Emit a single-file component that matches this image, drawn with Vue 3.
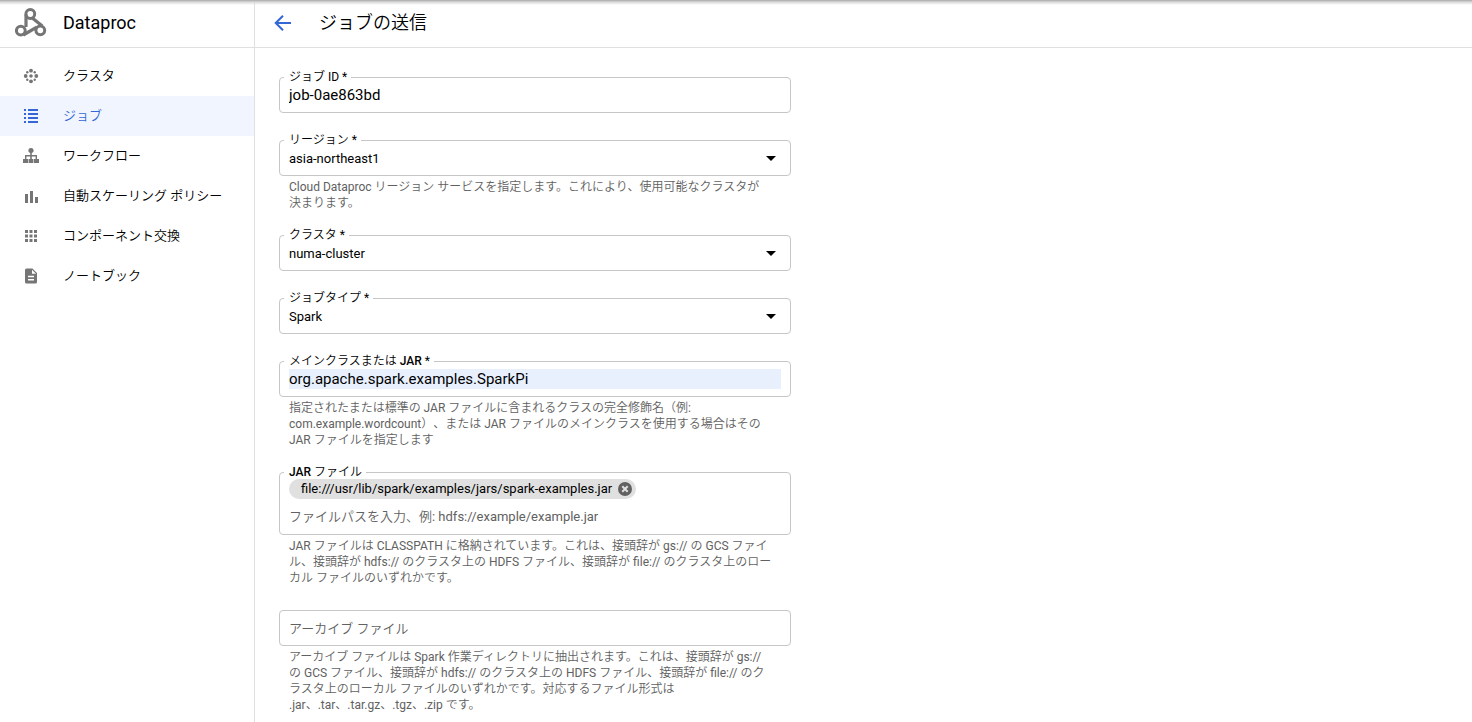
<script setup>
import { ref } from 'vue'

const navItems = [
  { id: 'clusters', label: 'クラスタ' },
  { id: 'jobs', label: 'ジョブ', active: true },
  { id: 'workflows', label: 'ワークフロー' },
  { id: 'autoscaling', label: '自動スケーリング ポリシー' },
  { id: 'components', label: 'コンポーネント交換' },
  { id: 'notebooks', label: 'ノートブック' },
]

const jobId = ref('job-0ae863bd')
const region = ref('asia-northeast1')
const cluster = ref('numa-cluster')
const jobType = ref('Spark')
const mainClass = ref('org.apache.spark.examples.SparkPi')
const jars = ref(['file:///usr/lib/spark/examples/jars/spark-examples.jar'])
const jarDraft = ref('')
const archive = ref('')

const regionHint = 'Cloud Dataproc リージョン サービスを指定します。これにより、使用可能なクラスタが\n決まります。'
const mainHint =
  '指定されたまたは標準の JAR ファイルに含まれるクラスの完全修飾名（例:\ncom.example.wordcount）、または JAR ファイルのメインクラスを使用する場合はその\nJAR ファイルを指定します'
const jarHint =
  'JAR ファイルは CLASSPATH に格納されています。これは、接頭辞が gs:// の GCS ファイ\nル、接頭辞が hdfs:// のクラスタ上の HDFS ファイル、接頭辞が file:// のクラスタ上のロー\nカル ファイルのいずれかです。'
const archiveHint =
  'アーカイブ ファイルは Spark 作業ディレクトリに抽出されます。これは、接頭辞が gs://\nの GCS ファイル、接頭辞が hdfs:// のクラスタ上の HDFS ファイル、接頭辞が file:// のク\nラスタ上のローカル ファイルのいずれかです。対応するファイル形式は\n.jar、.tar、.tar.gz、.tgz、.zip です。'

function removeJar(i) {
  jars.value.splice(i, 1)
}
</script>

<template>
  <div class="page">
    <aside class="sidebar">
      <div class="brand">
        <svg class="logo" width="32" height="30" viewBox="0 0 32 30" fill="none" stroke="#757575" aria-hidden="true">
          <circle cx="15.3" cy="6" r="4.400" stroke-width="3" />
          <circle cx="5.8" cy="22.600" r="4.400" stroke-width="3" />
          <circle cx="25.300" cy="22.300" r="4.400" stroke-width="3" />
          <path d="M11 6.500v12.500M17.300 10l10 8M8.300 27l13.500-7.800" stroke-width="3.200" />
        </svg>
        <span class="brand-name">Dataproc</span>
      </div>
      <nav class="nav">
        <a v-for="item in navItems" :key="item.id" href="#" class="nav-item" :class="{ active: item.active }">
          <svg class="nav-icon" width="18" height="18" viewBox="0 0 18 18" fill="currentColor" aria-hidden="true">
            <g v-if="item.id === 'clusters'">
              <circle cx="9" cy="9" r="1.800" />
              <circle cx="9" cy="3.700" r="1.900" />
              <circle cx="9" cy="14.300" r="1.900" />
              <circle cx="3.700" cy="9" r="1.900" />
              <circle cx="14.300" cy="9" r="1.900" />
              <circle cx="5.300" cy="5.300" r="1.200" />
              <circle cx="12.700" cy="5.300" r="1.200" />
              <circle cx="5.300" cy="12.700" r="1.200" />
              <circle cx="12.700" cy="12.700" r="1.200" />
            </g>
            <path
              v-else-if="item.id === 'jobs'"
              d="M2 2h2v2H2zM6 2h10v2H6zM2 6h2v2H2zM6 6h10v2H6zM2 10h2v2H2zM6 10h10v2H6zM2 14h2v2H2zM6 14h10v2H6z"
            />
            <path
              v-else-if="item.id === 'workflows'"
              d="M9 1a2.600 2.600 0 0 1 .8 5.100V8H15v4h2v4h-5v-4h1.600V9.400H9.800V12h1.600v4H6.600v-4h1.600V9.400H4.400V12H6v4H1v-4h2V8h5.200V6.100A2.600 2.600 0 0 1 9 1z"
            />
            <path v-else-if="item.id === 'autoscaling'" d="M3 7h3v9H3zM8 4h3v12H8zM13 10h3v6h-3z" />
            <path
              v-else-if="item.id === 'components'"
              d="M3 3h3v3H3zM7.500 3h3v3h-3zM12 3h3v3h-3zM3 7.500h3v3H3zM7.500 7.500h3v3h-3zM12 7.500h3v3h-3zM3 12h3v3H3zM7.500 12h3v3h-3zM12 12h3v3h-3z"
            />
            <path
              v-else
              fill-rule="evenodd"
              d="M4.500 1.500h6L15 6v9a1.500 1.500 0 0 1-1.500 1.500h-9A1.500 1.500 0 0 1 3 15V3a1.500 1.500 0 0 1 1.500-1.500zM10 2.700v4h4zM6 8.700v1.500h6V8.700zM6 12v1.500h6V12z"
            />
          </svg>
          <span>{{ item.label }}</span>
        </a>
      </nav>
    </aside>

    <main class="main">
      <header class="header">
        <button type="button" class="back" aria-label="戻る">
          <svg width="24" height="24" viewBox="0 0 24 24" fill="none" stroke="#3367d6" stroke-width="2" aria-hidden="true">
            <path d="M20 12H5.500M12 4.700L4.700 12l7.300 7.300" />
          </svg>
        </button>
        <h1 class="title">ジョブの送信</h1>
      </header>

      <form class="form" @submit.prevent>
        <div class="field">
          <div class="box">
            <label for="job-id" class="label">ジョブ ID *</label>
            <input id="job-id" v-model="jobId" class="text" type="text" autocomplete="off" />
          </div>
          <p class="hint"></p>
        </div>

        <div class="field">
          <div class="box">
            <label for="region" class="label">リージョン *</label>
            <select id="region" v-model="region" class="select">
              <option>asia-northeast1</option>
            </select>
            <svg class="caret" width="10" height="5" viewBox="0 0 10 5" aria-hidden="true"><path d="M0 0h10L5 5z" /></svg>
          </div>
          <p class="hint">{{ regionHint }}</p>
        </div>

        <div class="field">
          <div class="box">
            <label for="cluster" class="label">クラスタ *</label>
            <select id="cluster" v-model="cluster" class="select">
              <option>numa-cluster</option>
            </select>
            <svg class="caret" width="10" height="5" viewBox="0 0 10 5" aria-hidden="true"><path d="M0 0h10L5 5z" /></svg>
          </div>
          <p class="hint"></p>
        </div>

        <div class="field">
          <div class="box">
            <label for="job-type" class="label">ジョブタイプ *</label>
            <select id="job-type" v-model="jobType" class="select">
              <option>Spark</option>
            </select>
            <svg class="caret" width="10" height="5" viewBox="0 0 10 5" aria-hidden="true"><path d="M0 0h10L5 5z" /></svg>
          </div>
          <p class="hint"></p>
        </div>

        <div class="field">
          <div class="box">
            <label for="main-class" class="label">メインクラスまたは <span class="latin">JAR</span> *</label>
            <input id="main-class" v-model="mainClass" class="text filled" type="text" autocomplete="off" />
          </div>
          <p class="hint">{{ mainHint }}</p>
        </div>

        <div class="field">
          <div class="box chips">
            <label for="jars" class="label"><span class="latin">JAR</span> ファイル</label>
            <span v-for="(jar, i) in jars" :key="jar" class="chip">
              {{ jar }}
              <button type="button" class="chip-remove" aria-label="削除" @click="removeJar(i)">
                <svg width="14" height="14" viewBox="0 0 14 14" aria-hidden="true">
                  <circle cx="7" cy="7" r="7" fill="#616161" />
                  <path d="M4.300 4.300l5.400 5.400M9.700 4.300l-5.400 5.400" stroke="#e0e0e0" stroke-width="2" />
                </svg>
              </button>
            </span>
            <input
              id="jars"
              v-model="jarDraft"
              class="text small"
              type="text"
              placeholder="ファイルパスを入力、例: hdfs://example/example.jar"
            />
          </div>
          <p class="hint">{{ jarHint }}</p>
        </div>

        <div class="field">
          <div class="box">
            <input
              id="archive"
              v-model="archive"
              class="text small"
              type="text"
              aria-label="アーカイブ ファイル"
              placeholder="アーカイブ ファイル"
            />
          </div>
          <p class="hint">{{ archiveHint }}</p>
        </div>
      </form>
    </main>
  </div>
</template>

<style>
body {
  margin: 0;
  background: #fff;
}
</style>

<style scoped>
.page {
  position: relative;
  display: flex;
  min-height: 100vh;
  font-family: Roboto, 'Noto Sans CJK JP DemiLight', 'Noto Sans CJK JP Light', 'Noto Sans CJK JP', sans-serif;
  font-size: 13px;
  line-height: 20px;
  text-spacing-trim: space-all;
  color: #000;
}
.page::before {
  content: '';
  position: absolute;
  inset: 0 0 auto;
  height: 5px;
  background: linear-gradient(#a8a8a8, #d8d8d8 40%, rgba(255, 255, 255, 0));
}
.sidebar {
  flex: 0 0 254px;
  border-right: 1px solid #e0e0e0;
}
.brand,
.header {
  display: flex;
  align-items: center;
  box-sizing: border-box;
  height: 48px;
  padding-bottom: 2px;
  border-bottom: 1px solid #e0e0e0;
}
.brand {
  gap: 16px;
  padding-left: 15px;
}
.brand-name {
  font-size: 18px;
}
.nav {
  padding-top: 8px;
}
.nav-item {
  display: flex;
  align-items: center;
  gap: 23px;
  height: 40px;
  padding-left: 22px;
  color: #000;
  text-decoration: none;
}
.nav-icon {
  color: #757575;
}
.nav-item.active,
.nav-item.active .nav-icon {
  color: #3367d6;
}
.nav-item.active {
  background: #f0f5ff;
}
.main {
  flex: 1;
  min-width: 0;
}
.header {
  gap: 24px;
  padding-left: 16px;
}
.back {
  display: flex;
  padding: 0;
  border: 0;
  background: none;
}
.title {
  margin: 0;
  font-size: 18px;
  font-weight: 400;
}
.form {
  display: flex;
  flex-direction: column;
  gap: 24px;
  max-width: 512px;
  padding: 29px 24px 8px;
}
.box {
  position: relative;
  display: flex;
  align-items: center;
  box-sizing: border-box;
  min-height: 36px;
  padding: 0 9px;
  border: 1px solid #c6c6c6;
  border-radius: 4px;
}
.label {
  position: absolute;
  top: -8px;
  left: 4px;
  padding: 0 4px 0 5px;
  background: #fff;
  font-size: 12px;
  line-height: 14px;
}
.latin {
  font-weight: 500;
}
.text,
.select {
  flex: 1;
  min-width: 0;
  height: 20px;
  padding: 0;
  border: 0;
  outline: 0;
  background: transparent;
  color: #000;
  font-family: inherit;
}
.text {
  font-size: 15px;
}
.text.small,
.select {
  font-size: 13px;
}
.select {
  appearance: none;
}
.text::placeholder {
  color: #616161;
  opacity: 1;
}
.filled {
  background: #e8f0fe;
}
.caret {
  margin-right: 5px;
}
.chips {
  flex-direction: column;
  align-items: flex-start;
  gap: 7px;
  padding-top: 6px;
  padding-bottom: 8px;
}
.chips .text {
  flex: none;
  width: 100%;
}
.chip {
  display: flex;
  align-items: center;
  gap: 6px;
  height: 20px;
  padding: 0 4px 0 12px;
  border-radius: 10px;
  background: #e0e0e0;
}
.chip-remove {
  display: flex;
  padding: 0;
  border: 0;
  background: none;
}
.hint {
  margin: 0;
  padding: 3px 10px 0;
  color: #616161;
  font-size: 12px;
  line-height: 16px;
  white-space: pre-line;
}
</style>
